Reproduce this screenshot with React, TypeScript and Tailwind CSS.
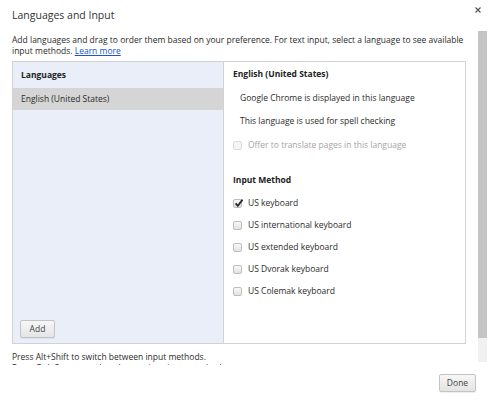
import type { ReactNode } from "react";

/** Chrome-style "Languages and Input" settings overlay. */

const inputMethods = [
  { label: "US keyboard", checked: true },
  { label: "US international keyboard", checked: false },
  { label: "US extended keyboard", checked: false },
  { label: "US Dvorak keyboard", checked: false },
  { label: "US Colemak keyboard", checked: false },
];

function Check({ checked, disabled }: { checked?: boolean; disabled?: boolean }) {
  return (
    <span
      className={
        "relative inline-block h-[9px] w-[9px] shrink-0 rounded-[2px] border " +
        (disabled
          ? "border-[#dcdcdc] bg-[#f5f5f5]"
          : "border-[#bdbdbd] bg-gradient-to-b from-[#f8f8f8] to-[#e3e3e3]")
      }
    >
      {checked && (
        <svg viewBox="0 0 10 10" className="absolute -top-[2px] left-[0px] h-[10px] w-[10px]">
          <path d="M1.6 5.4 L3.8 7.8 L8.6 1.6" fill="none" stroke="#2a2a2a" strokeWidth="1.8" />
        </svg>
      )}
    </span>
  );
}

function CheckRow({
  children,
  checked,
  disabled,
  h = "h-[22px]",
}: {
  children: ReactNode;
  checked?: boolean;
  disabled?: boolean;
  h?: string;
}) {
  return (
    <label className={"flex items-center gap-[6px] " + h}>
      <Check checked={checked} disabled={disabled} />
      <span className={disabled ? "text-[#a5a5a5]" : "text-[#2b2b2b]"}>{children}</span>
    </label>
  );
}

const buttonClass =
  "rounded-[2px] border border-[#c3c3c3] bg-gradient-to-b from-[#f7f7f7] to-[#e4e4e4] text-[#444] leading-none shadow-[0_1px_0_rgba(0,0,0,0.06)]";

export default function App() {
  return (
    <div
      className="relative h-[400px] w-[488px] overflow-hidden bg-white text-[8.5px] text-[#2b2b2b]"
      style={{ fontFamily: '"Open Sans", "Noto Sans", sans-serif' }}
    >
      <div className="flex h-[30px] items-start justify-between pl-[12px] pr-[7px] pt-[8px]">
        <h1 className="text-[10.5px] font-normal leading-[14px] text-[#333]">Languages and Input</h1>
        <svg viewBox="0 0 6 6" className="mt-[-1px] h-[6px] w-[6px]">
          <path d="M0.5 0.5 L5.5 5.5 M5.5 0.5 L0.5 5.5" stroke="#555" strokeWidth="1.2" />
        </svg>
      </div>

      <div className="flex h-[335px]">
        <div className="min-w-0 flex-1 overflow-hidden pl-[12px] pr-[12px]">
          <p className="whitespace-nowrap pt-[4px] leading-[11px]">
            <span className="block">
              Add languages and drag to order them based on your preference. For text input, select a language to see available
            </span>
            <span className="block">
              input methods. <a className="text-[#1a55c9] underline">Learn more</a>
            </span>
          </p>

          <div className="mt-[5px] flex h-[283px] border border-[#d2d2d2]">
            <div className="flex w-[211px] shrink-0 flex-col border-r border-[#d2d2d2] bg-[#e9eef9]">
              <div className="flex h-[26px] items-center px-[8px] font-bold text-[#222]">Languages</div>
              <div className="flex h-[22px] items-center bg-[#d5d5d5] px-[8px]">English (United States)</div>
              <div className="flex-1" />
              <div className="pb-[5px] pl-[7px]">
                <button className={buttonClass + " h-[18px] w-[35px] text-[8.5px]"}>Add</button>
              </div>
            </div>
            <div className="flex-1 bg-white pl-[9px] pr-[8px]">
              <div className="flex h-[25px] items-center font-bold text-[#222]">English (United States)</div>
              <div className="flex h-[22px] items-center pl-[7px]">Google Chrome is displayed in this language</div>
              <div className="flex h-[24px] items-center pl-[7px]">This language is used for spell checking</div>
              <CheckRow disabled h="h-[24px]">
                Offer to translate pages in this language
              </CheckRow>
              <div className="mt-[12px] flex h-[23px] items-center font-bold text-[#222]">Input Method</div>
              {inputMethods.map((m) => (
                <CheckRow key={m.label} checked={m.checked}>
                  {m.label}
                </CheckRow>
              ))}
            </div>
          </div>

          <p className="mt-[7px] whitespace-nowrap leading-[11px]">Press Alt+Shift to switch between input methods.</p>
          <p className="whitespace-nowrap leading-[11px]">Press Ctrl+Space to select the previous input method.</p>
        </div>

        <div className="mr-[1px] mt-[1px] flex h-[331px] w-[9px] flex-col bg-[#f1f1f1]">
          <div className="h-[307px] bg-[#c4c4c4]" />
        </div>
      </div>

      <div className="flex justify-end pr-[12px] pt-[9px]">
        <button className={buttonClass + " h-[18px] w-[37px] text-[8.5px]"}>Done</button>
      </div>
    </div>
  );
}
